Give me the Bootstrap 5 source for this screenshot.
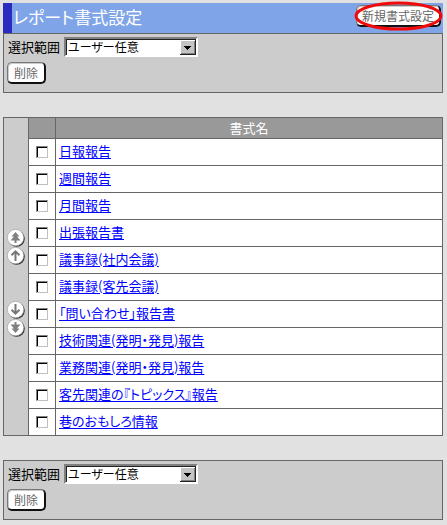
<!DOCTYPE html>
<html lang="ja">
<head>
<meta charset="utf-8">
<meta name="viewport" content="width=device-width, initial-scale=1">
<title>レポート書式設定</title>
<link href="https://cdn.jsdelivr.net/npm/bootstrap@5.3.0/dist/css/bootstrap.min.css" rel="stylesheet">
<style>
body{background:#e1e1e1;color:#000;font:13px/20px "Noto Sans CJK JP",sans-serif;font-feature-settings:"palt";padding:3px 4px 3px 3px}
.title-bar{background:#7fa5e8;border-left:9px solid #2b2bbf;height:30px;padding:2px 2px 0 1px}
.title-bar h1{font-size:17px;line-height:24px;color:#fff;font-weight:400}
.panel{background:#ccc;border:1px solid #666;height:60px;padding:3px}
.panel label{width:57px;padding-left:1px}
.panel .classic-btn{margin-top:5px}
.classic-select{appearance:none;width:134px;height:20px;border:2px solid;border-color:#808080 #fff #fff #808080;box-shadow:inset 1px 1px #222;border-radius:0;font-size:12px;line-height:16px;padding:0 18px 0 2px;color:#000;font-feature-settings:"palt";
background:#fff url("data:image/svg+xml,%3Csvg xmlns='http://www.w3.org/2000/svg' width='16' height='15' shape-rendering='crispEdges'%3E%3Cpath fill='%23222' d='M0 0h16v15H0z'/%3E%3Cpath fill='%23fff' d='M0 0h15v14H0z'/%3E%3Cpath fill='%23808080' d='M1 1h14v13H1z'/%3E%3Cpath fill='%23c3c3c3' d='M1 1h13v12H1z'/%3E%3Cpath d='M4 6h7v1H4zM5 7h5v1H5zM6 8h3v1H6zM7 9h1v1H7z'/%3E%3C/svg%3E") no-repeat right 0 top 1px}
.classic-btn{height:22px;background:#fff;border:1px solid #777;border-right:2px solid #111;border-bottom:2px solid #111;border-radius:5px;font-size:12px;line-height:18px;color:#666;padding:0 6px;box-shadow:inset 1px 1px #ccc;white-space:nowrap}
.title-bar .classic-btn{padding:0 5px}
.callout-ring{position:absolute;left:-2px;top:-4px;width:89px;height:30px;pointer-events:none}
.list-tbl{border-collapse:collapse;margin:24px 0}
.list-tbl th,.list-tbl td{border:1px solid #666;padding:0;height:27px;background:#fff;vertical-align:middle}
.list-tbl th{background:#999;color:#fff;font-weight:400;height:21px;text-align:center}
.list-tbl .mover{background:#ccc;width:25px;padding-top:13px}
.list-tbl .pick{width:27px}
.list-tbl td.name{padding:0 3px 2px}
.list-tbl a{color:#00f;text-decoration:underline;text-underline-offset:2px}
.tick{appearance:none;display:block;margin:0 auto;width:12px;height:12px;background:#fff;border:1px solid;border-color:#808080 #c0c0c0 #c0c0c0 #808080;box-shadow:inset 1px 1px #000}
.tick:checked{background:#333}
.move-btn{border:0;background:none;padding:0;width:18px;height:18px;display:block}
.move-btn svg{display:block}
.move-gap{height:36px}
</style>
<script src="https://cdn.jsdelivr.net/npm/bootstrap@5.3.0/dist/js/bootstrap.bundle.min.js"></script>
</head>
<body>
<svg width="0" height="0" class="d-none" aria-hidden="true">
<symbol id="disc" viewBox="0 0 18 18"><circle cx="9.6" cy="9.6" r="8.2" fill="#333"/><circle cx="8.6" cy="8.6" r="8.2" fill="#fff" stroke="#999" stroke-width=".6"/></symbol>
<symbol id="one" viewBox="0 0 18 18"><path d="M8.5 14V4.500M4.500 8.300l4-4 4 4" fill="none" stroke="#777" stroke-width="2"/></symbol>
<symbol id="two" viewBox="0 0 18 18"><path d="M8.500 3L4.500 7.500H7L3.500 11.500H7.500V14H9.500V11.500H13.500L10 7.500H12.500Z" fill="#808080"/></symbol>
</svg>
<header class="title-bar d-flex justify-content-between align-items-start">
<h1 class="m-0">レポート書式設定</h1>
<div class="position-relative">
<button type="button" class="classic-btn d-block">新規書式設定</button>
<svg class="callout-ring" viewBox="0 0 89 30" aria-hidden="true"><ellipse cx="44.500" cy="15" rx="42.500" ry="13" fill="none" stroke="#f00a0a" stroke-width="3"/></svg>
</div>
</header>
<section class="panel">
<div class="d-flex align-items-center"><label for="range1">選択範囲</label>
<select id="range1" class="classic-select"><option>ユーザー任意</option></select></div>
<button type="button" class="classic-btn d-block">削除</button>
</section>
<table class="list-tbl w-100">
<tbody>
<tr><td class="mover" rowspan="12">
<div class="d-flex flex-column align-items-center">
<button type="button" class="move-btn" aria-label="先頭へ"><svg width="18" height="18"><use href="#disc"/><use href="#two"/></svg></button>
<button type="button" class="move-btn" aria-label="上へ"><svg width="18" height="18"><use href="#disc"/><use href="#one"/></svg></button>
<div class="move-gap"></div>
<button type="button" class="move-btn" aria-label="下へ"><svg width="18" height="18"><use href="#disc"/><g transform="matrix(1 0 0 -1 0 17)"><use href="#one" width="18" height="18"/></g></svg></button>
<button type="button" class="move-btn" aria-label="末尾へ"><svg width="18" height="18"><use href="#disc"/><g transform="matrix(1 0 0 -1 0 17)"><use href="#two" width="18" height="18"/></g></svg></button>
</div></td><th class="pick"></th><th scope="col">書式名</th></tr>
<tr><td><input type="checkbox" class="tick" aria-labelledby="n1"></td><td class="name"><a id="n1" href="#">日報報告</a></td></tr>
<tr><td><input type="checkbox" class="tick" aria-labelledby="n2"></td><td class="name"><a id="n2" href="#">週間報告</a></td></tr>
<tr><td><input type="checkbox" class="tick" aria-labelledby="n3"></td><td class="name"><a id="n3" href="#">月間報告</a></td></tr>
<tr><td><input type="checkbox" class="tick" aria-labelledby="n4"></td><td class="name"><a id="n4" href="#">出張報告書</a></td></tr>
<tr><td><input type="checkbox" class="tick" aria-labelledby="n5"></td><td class="name"><a id="n5" href="#">議事録(社内会議)</a></td></tr>
<tr><td><input type="checkbox" class="tick" aria-labelledby="n6"></td><td class="name"><a id="n6" href="#">議事録(客先会議)</a></td></tr>
<tr><td><input type="checkbox" class="tick" aria-labelledby="n7"></td><td class="name"><a id="n7" href="#">「問い合わせ」報告書</a></td></tr>
<tr><td><input type="checkbox" class="tick" aria-labelledby="n8"></td><td class="name"><a id="n8" href="#">技術関連(発明・発見)報告</a></td></tr>
<tr><td><input type="checkbox" class="tick" aria-labelledby="n9"></td><td class="name"><a id="n9" href="#">業務関連(発明・発見)報告</a></td></tr>
<tr><td><input type="checkbox" class="tick" aria-labelledby="n10"></td><td class="name"><a id="n10" href="#">客先関連の『トピックス』報告</a></td></tr>
<tr><td><input type="checkbox" class="tick" aria-labelledby="n11"></td><td class="name"><a id="n11" href="#">巷のおもしろ情報</a></td></tr>
</tbody>
</table>
<section class="panel">
<div class="d-flex align-items-center"><label for="range2">選択範囲</label>
<select id="range2" class="classic-select"><option>ユーザー任意</option></select></div>
<button type="button" class="classic-btn d-block">削除</button>
</section>
</body>
</html>
